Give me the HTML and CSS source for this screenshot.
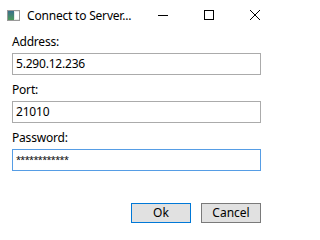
FILE: index.html
```html
<!DOCTYPE html>
<html>
<head>
<meta charset="utf-8">
<link rel="stylesheet" href="styles.css">
</head>
<body>
<div class="window">
  <div class="titlebar">
    <svg class="appicon" width="13" height="11" viewBox="0 0 13 11">
      <defs>
        <linearGradient id="g" x1="0" y1="0" x2="0" y2="1">
          <stop offset="0" stop-color="#3b6f8c"/>
          <stop offset="1" stop-color="#4c9a5a"/>
        </linearGradient>
      </defs>
      <rect x="0.5" y="0.5" width="12" height="10" fill="#e8e8e8" stroke="#9a9a9a"/>
      <rect x="1" y="1" width="6" height="9" fill="url(#g)"/>
      <rect x="8" y="2" width="4" height="7" fill="#ffffff"/>
    </svg>
    <span class="title">Connect to Server...</span>
    <div class="controls">
      <div class="ctl"><svg width="10" height="10" viewBox="0 0 10 10"><path d="M0 5.5H10" stroke="#000" stroke-width="1"/></svg></div>
      <div class="ctl"><svg width="10" height="10" viewBox="0 0 10 10"><rect x="0.5" y="0.5" width="9" height="9" fill="none" stroke="#000" stroke-width="1"/></svg></div>
      <div class="ctl"><svg width="10" height="10" viewBox="0 0 10 10"><path d="M0 0L10 10M10 0L0 10" stroke="#000" stroke-width="1"/></svg></div>
    </div>
  </div>
  <div class="content">
    <div class="label">Address:</div>
    <div class="box">5.290.12.236</div>
    <div class="label">Port:</div>
    <div class="box">21010</div>
    <div class="label">Password:</div>
    <div class="box focused pw">************</div>
    <div class="buttons">
      <div class="btn default">Ok</div>
      <div class="btn">Cancel</div>
    </div>
  </div>
</div>
</body>
</html>
```
FILE: styles.css
```css
html, body {
  margin: 0;
  padding: 0;
  background: #ffffff;
}
.window {
  width: 274px;
  height: 234px;
  background: #ffffff;
  font-family: "Noto Sans", "Open Sans", sans-serif;
  font-size: 12px;
  color: #000;
  overflow: hidden;
}
.titlebar {
  height: 30px;
  display: flex;
  align-items: center;
}
.appicon {
  margin-left: 7px;
  margin-right: 7px;
  flex: none;
}
.title {
  font-size: 12px;
  letter-spacing: -0.2px;
}
.controls {
  margin-left: auto;
  display: flex;
  height: 30px;
  margin-right: -4px;
}
.ctl {
  width: 46px;
  height: 30px;
  display: flex;
  align-items: center;
  justify-content: center;
}
.content {
  padding: 2px 13px 0 12px;
}
.label {
  height: 16px;
  line-height: 16px;
  margin-top: 7px;
  margin-bottom: 3px;
  letter-spacing: -0.2px;
}
.content .label:first-child {
  margin-top: 2px;
}
.box {
  height: 20px;
  line-height: 20px;
  border: 1px solid #ababab;
  padding-left: 3px;
  margin-bottom: 7px;
  letter-spacing: -0.2px;
}
.box.focused {
  border-color: #569de5;
}
.pw {
  font-size: 9px;
  letter-spacing: -0.6px;
}
.buttons {
  display: flex;
  justify-content: flex-end;
  gap: 10px;
  margin-top: 32px;
}
.btn {
  width: 58px;
  height: 18px;
  line-height: 18px;
  text-align: center;
  background: #e1e1e1;
  border: 1px solid #7a7a7a;
}
.btn.default {
  border-color: #0078d7;
}
```
